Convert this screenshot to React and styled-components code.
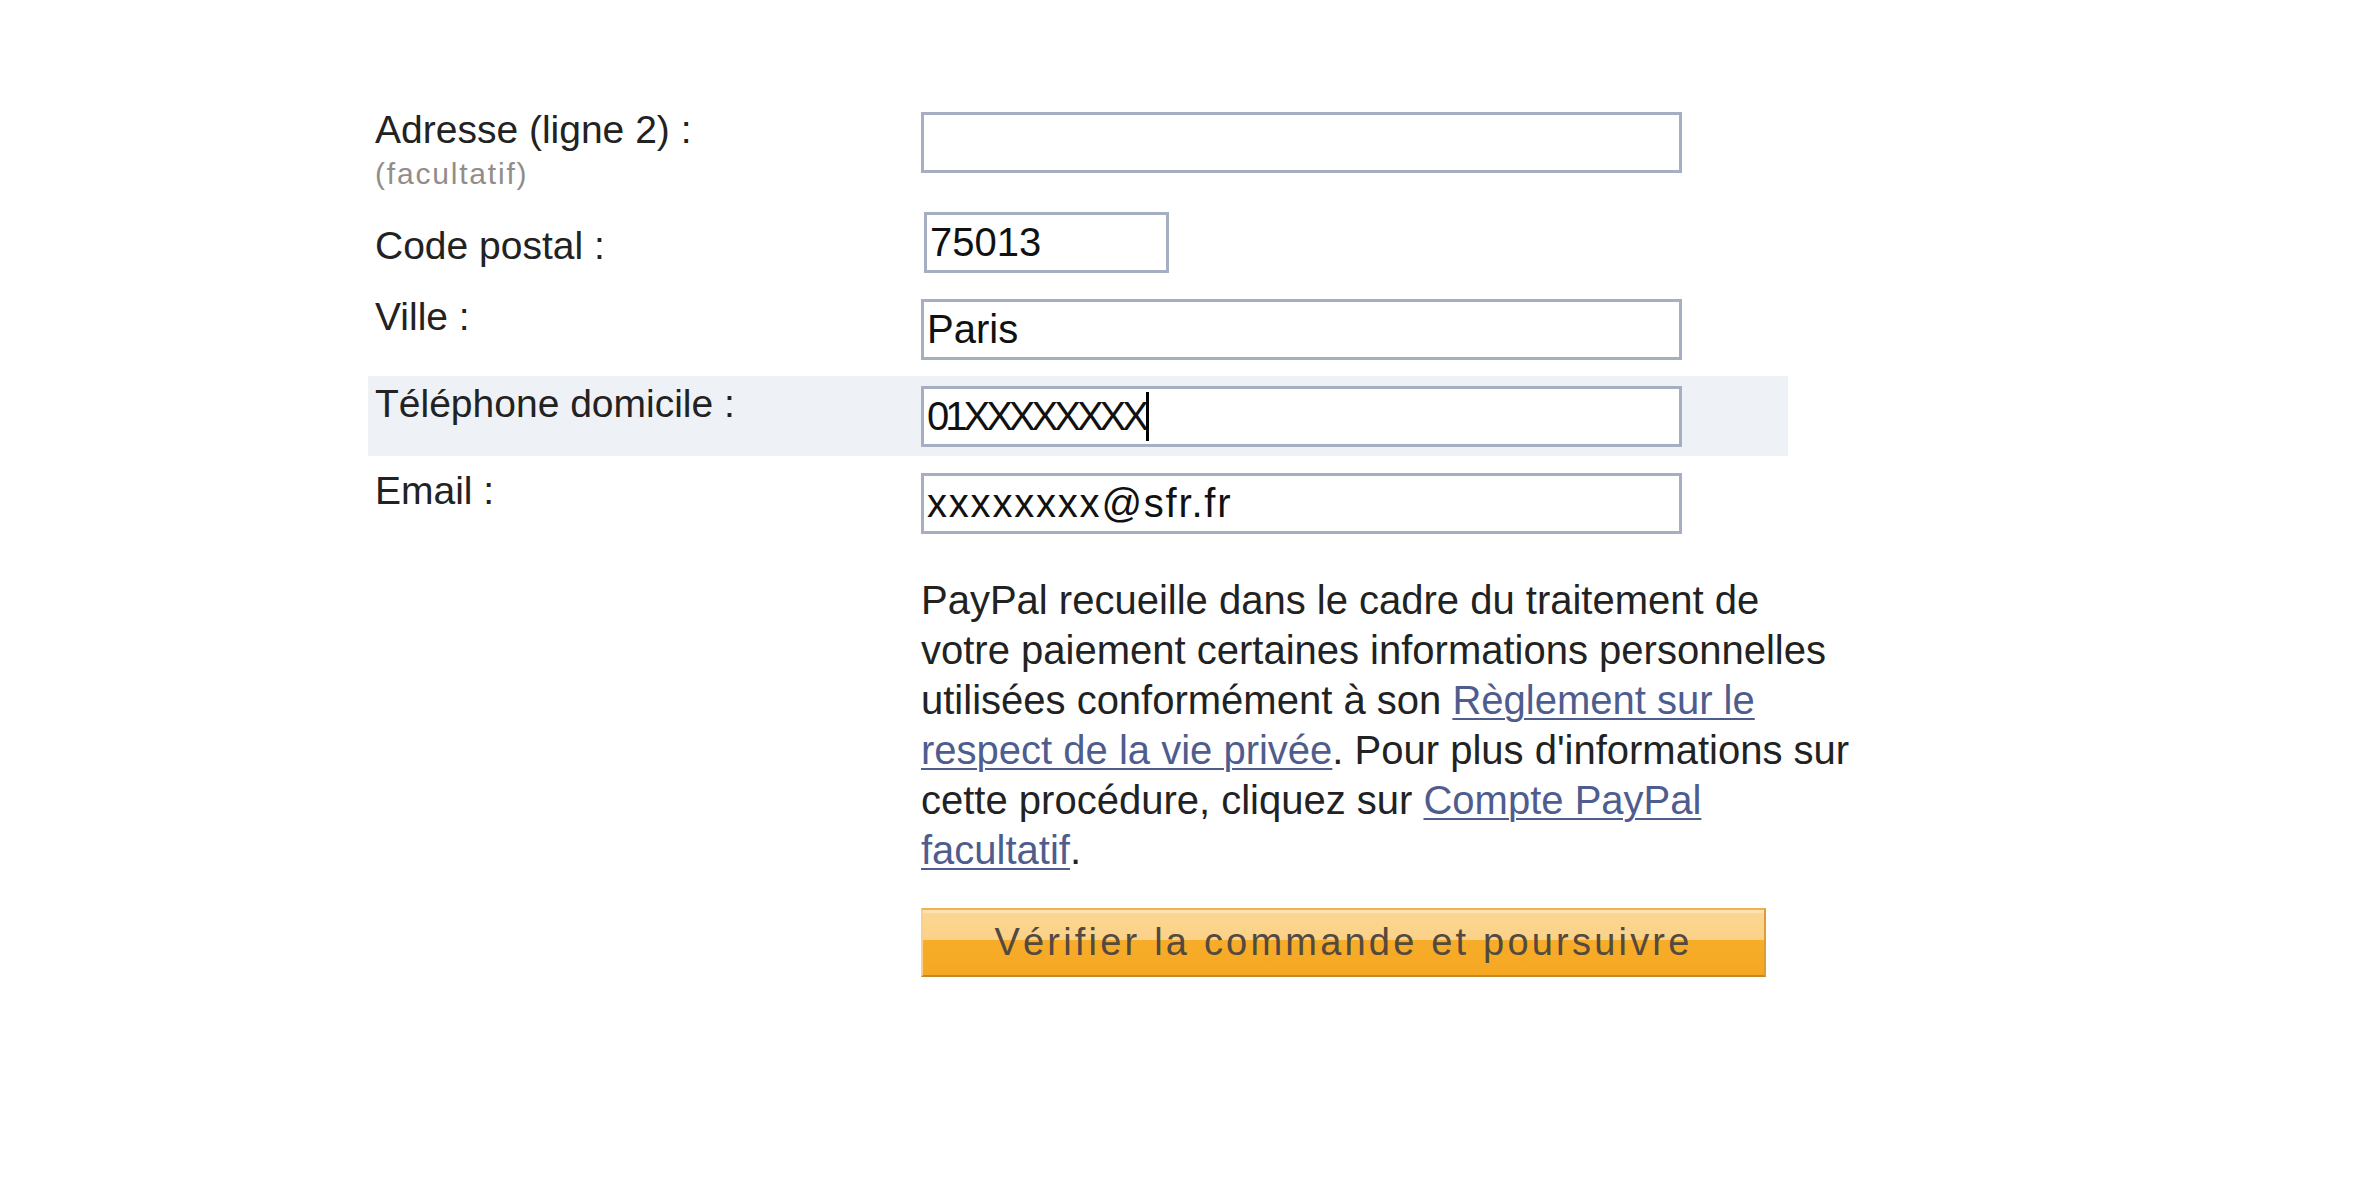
import React from 'react'
import styled, { createGlobalStyle } from 'styled-components'

const GlobalStyle = createGlobalStyle`
  body {
    margin: 0;
    background: #fff;
    font-family: "Liberation Sans", Arial, sans-serif;
  }
`

const Page = styled.div`
  padding: 102px 0 60px 368px;
`

const Form = styled.div`
  width: 1420px;
  display: flex;
  flex-direction: column;
  gap: 7px;
`

const Row = styled.div`
  display: flex;
  align-items: flex-start;
  padding: 10px 7px 9px;
  background: ${(props) => (props.$highlight ? '#eef1f6' : 'transparent')};
`

const LabelCell = styled.div`
  width: 546px;
  flex-shrink: 0;
  margin-top: ${(props) => (props.$offset !== undefined ? props.$offset : -2)}px;
`

const Label = styled.div`
  font-size: 39px;
  line-height: 40px;
  color: #222;
`

const Hint = styled.div`
  font-size: 30px;
  line-height: 36px;
  padding-top: 6px;
  margin-bottom: -6px;
  letter-spacing: 1.8px;
  color: #928d8a;
`

const FieldWrap = styled.div`
  position: relative;
  margin-left: ${(props) => props.$shift || 0}px;
`

const Field = styled.input`
  box-sizing: border-box;
  display: block;
  width: ${(props) => props.$width}px;
  height: 61px;
  margin: 0;
  padding: 0 3px;
  border: 3px solid #a6aec1;
  border-radius: 0;
  background: #fff;
  color: #111;
  font: 40px "Liberation Sans", Arial, sans-serif;
  letter-spacing: ${(props) => props.$spacing || 0}px;
  outline: none;
`

const Caret = styled.span`
  position: absolute;
  left: ${(props) => props.$left}px;
  top: 6px;
  bottom: 6px;
  width: 3px;
  background: #000;
`

const Content = styled.div`
  display: flex;
  flex-direction: column;
  align-items: flex-start;
`

const Note = styled.p`
  margin: 15px 0 0;
  font-size: 40px;
  line-height: 50px;
  color: #222;
  white-space: nowrap;
`

const Link = styled.a`
  color: #4e5d8e;
  text-decoration: underline;
  text-underline-offset: 4px;
  text-decoration-thickness: 2px;
`

const SubmitButton = styled.button`
  box-sizing: border-box;
  width: 845px;
  height: 69px;
  margin-top: 33px;
  padding: 0;
  border: 2px solid;
  border-color: #f0b24c #dc9c36 #c3872e #f7d08f;
  border-radius: 0;
  background: linear-gradient(#fcd793 0, #fbd188 46%, #f7ad2a 46%, #f5a722 100%);
  box-shadow: inset 0 3px 0 #fde3b2;
  color: #54493f;
  font: 38px "Liberation Sans", Arial, sans-serif;
  letter-spacing: 3.2px;
  text-align: center;
  cursor: pointer;
`

const fields = [
  { label: 'Adresse (ligne 2) :', hint: '(facultatif)', value: '', width: 761 },
  { label: 'Code postal :', value: '75013', width: 245, shift: 3, offset: 14 },
  { label: 'Ville :', value: 'Paris', width: 761 },
  {
    label: 'Téléphone domicile :',
    value: '01XXXXXXXX',
    width: 761,
    spacing: -4,
    caret: 225,
    highlight: true,
  },
  { label: 'Email :', value: 'xxxxxxxx@sfr.fr', width: 761, spacing: 1.8 },
]

const App = () => (
  <Page>
    <GlobalStyle />
    <Form>
      {fields.map((f) => (
        <Row key={f.label} $highlight={f.highlight}>
          <LabelCell $offset={f.offset}>
            <Label>{f.label}</Label>
            {f.hint && <Hint>{f.hint}</Hint>}
          </LabelCell>
          <FieldWrap $shift={f.shift}>
            <Field
              type="text"
              defaultValue={f.value}
              $width={f.width}
              $spacing={f.spacing}
            />
            {f.caret && <Caret $left={f.caret} />}
          </FieldWrap>
        </Row>
      ))}
      <Row>
        <LabelCell />
        <Content>
          <Note>
            PayPal recueille dans le cadre du traitement de
            <br />
            votre paiement certaines informations personnelles
            <br />
            utilisées conformément à son <Link href="#">Règlement sur le</Link>
            <br />
            <Link href="#">respect de la vie privée</Link>. Pour plus
            d'informations sur
            <br />
            cette procédure, cliquez sur <Link href="#">Compte PayPal</Link>
            <br />
            <Link href="#">facultatif</Link>.
          </Note>
          <SubmitButton type="button">
            Vérifier la commande et poursuivre
          </SubmitButton>
        </Content>
      </Row>
    </Form>
  </Page>
)

export default App
